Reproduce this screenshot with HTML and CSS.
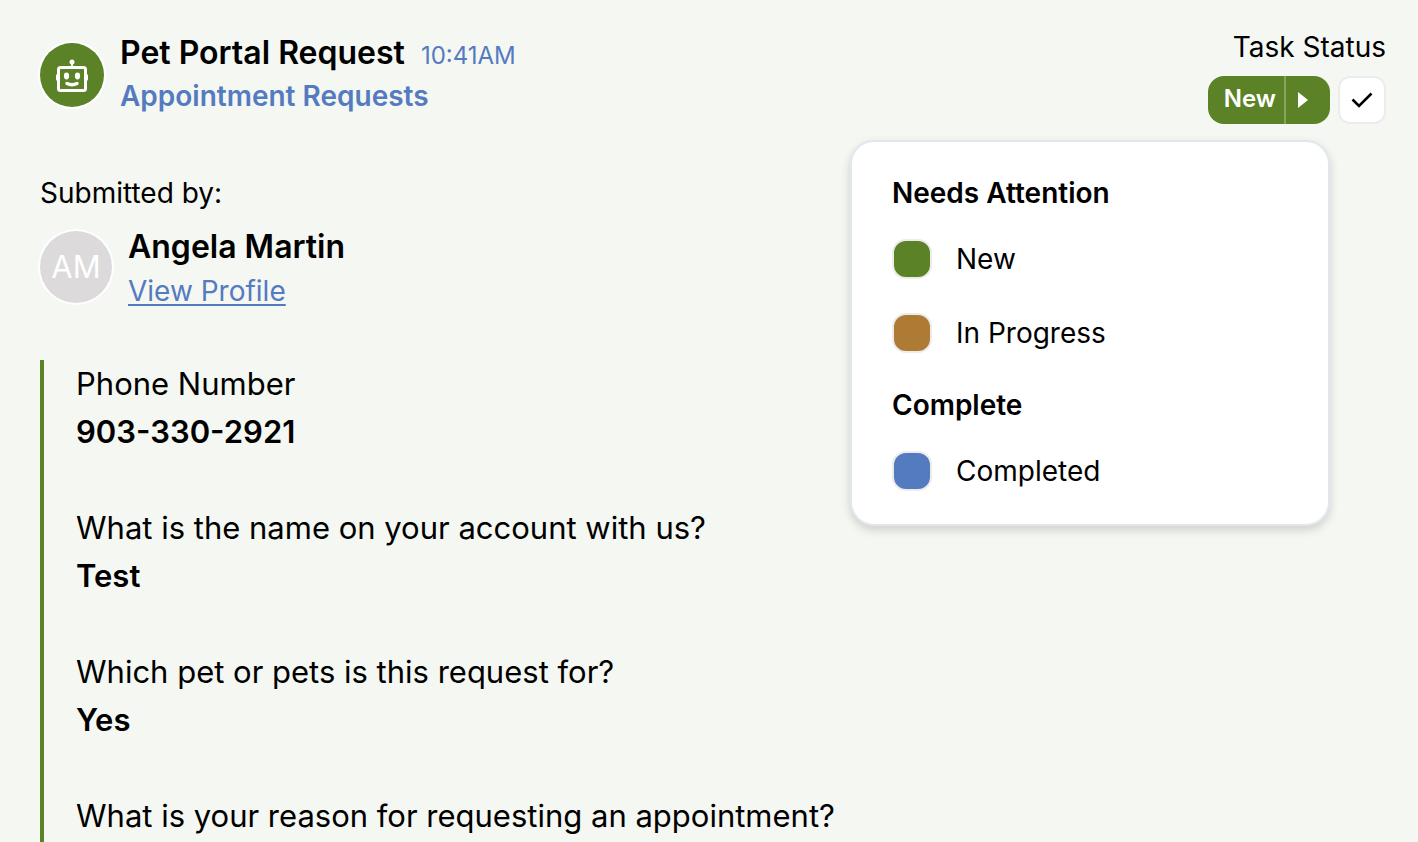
FILE: index.html
```html
<!DOCTYPE html>
<html lang="en">
<head>
<meta charset="utf-8">
<meta name="viewport" content="width=device-width, initial-scale=1">
<title>Pet Portal Request</title>
<link rel="stylesheet" href="styles.css">
</head>
<body>
<main class="page">
  <header class="header">
    <div class="request">
      <span class="bot">
        <svg width="32" height="34" viewBox="0 0 32 34" fill="none" aria-hidden="true">
          <circle cx="16" cy="4" r="2.500" fill="#fff"/>
          <path d="M16 4v6" stroke="#fff" stroke-width="2"/>
          <rect x="2.500" y="9.500" width="27" height="23" rx="2" stroke="#fff" stroke-width="3"/>
          <path d="M1.300 17.500v4M30.700 17.500v4" stroke="#fff" stroke-width="2.600" stroke-linecap="round"/>
          <ellipse cx="10.500" cy="18" rx="2.600" ry="3.400" fill="#fff"/>
          <ellipse cx="21.500" cy="18" rx="2.600" ry="3.400" fill="#fff"/>
          <path d="M11 25.500q5 2.500 10 0" stroke="#fff" stroke-width="3.400" stroke-linecap="round"/>
        </svg>
      </span>
      <div>
        <div class="title-row"><h1 class="title">Pet Portal Request</h1><time class="time">10:41AM</time></div>
        <p class="category">Appointment Requests</p>
      </div>
    </div>
    <div class="status">
      <p class="status-label">Task Status</p>
      <div class="status-actions">
        <button class="status-button" type="button" aria-expanded="true">
          <span class="status-name">New</span>
          <span class="status-arrow"><svg width="10" height="16" viewBox="0 0 10 16" aria-hidden="true"><path d="M0 0l10 8-10 8z" fill="#fff"/></svg></span>
        </button>
        <button class="check-button" type="button" aria-label="Mark complete">
          <svg width="22" height="16" viewBox="0 0 22 16" fill="none" aria-hidden="true"><path d="M1.500 7.500l6.500 6.500L20.500 1.500" stroke="#000" stroke-width="2.600"/></svg>
        </button>
      </div>
      <div class="menu">
        <h2 class="menu-heading">Needs Attention</h2>
        <button class="option" type="button"><span class="swatch swatch-new"></span>New</button>
        <button class="option" type="button"><span class="swatch swatch-progress"></span>In Progress</button>
        <h2 class="menu-heading menu-heading-next">Complete</h2>
        <button class="option" type="button"><span class="swatch swatch-completed"></span>Completed</button>
      </div>
    </div>
  </header>
  <section class="submitter">
    <p>Submitted by:</p>
    <div class="person">
      <span class="avatar">AM</span>
      <div>
        <p class="person-name">Angela Martin</p>
        <a class="profile" href="#">View Profile</a>
      </div>
    </div>
  </section>
  <dl class="answers">
    <div><dt>Phone Number</dt><dd>903-330-2921</dd></div>
    <div><dt>What is the name on your account with us?</dt><dd>Test</dd></div>
    <div><dt>Which pet or pets is this request for?</dt><dd>Yes</dd></div>
    <div><dt>What is your reason for requesting an appointment?</dt></div>
  </dl>
</main>
</body>
</html>
```
FILE: styles.css
```css
* { box-sizing: border-box; }
body {
  margin: 0;
  background: #f5f7f2;
  color: #000;
  font-family: Inter, "Liberation Sans", sans-serif;
  font-size: 28px;
  line-height: 40px;
}
h1, h2, p, dl, dd { margin: 0; }
button { font: inherit; color: inherit; cursor: pointer; }
.page {
  display: flex;
  flex-direction: column;
  min-height: 100vh;
  padding: 27px 32px 0 40px;
}
.header { display: flex; justify-content: space-between; align-items: flex-start; }
.request { display: flex; gap: 16px; padding-top: 4px; }
.bot {
  display: flex;
  align-items: center;
  justify-content: center;
  width: 64px;
  height: 64px;
  margin-top: 12px;
  border-radius: 50%;
  background: #5b8227;
  box-shadow: 0 0 0 2px #fff;
}
.title-row { display: flex; align-items: baseline; gap: 16px; }
.title { font-size: 32px; line-height: 44px; font-weight: 600; }
.time { font-size: 24px; color: #547bc0; }
.category { color: #547bc0; font-weight: 600; }
.status { position: relative; }
.status-label { text-align: right; }
.status-actions { display: flex; justify-content: flex-end; gap: 8px; margin-top: 9px; }
.status-button {
  display: flex;
  height: 48px;
  padding: 0;
  border: 0;
  border-radius: 16px;
  background: #5b8227;
  color: #fff;
  font-size: 24px;
  font-weight: 600;
  line-height: 46px;
}
.status-name { padding: 0 8px 0 16px; }
.status-arrow {
  display: flex;
  align-items: center;
  align-self: stretch;
  padding: 0 22px 0 12px;
  border-left: 2px solid #86a35f;
}
.check-button {
  display: flex;
  align-items: center;
  justify-content: center;
  width: 48px;
  height: 48px;
  padding: 0;
  border: 2px solid #eeebec;
  border-radius: 12px;
  background: #fff;
}
.menu {
  position: absolute;
  top: 113px;
  right: 56px;
  width: 480px;
  padding: 31px 40px 33px;
  border: 2px solid #e2e6ef;
  border-radius: 24px;
  background: #fff;
  box-shadow: 0 4px 10px rgba(0, 0, 0, 0.16);
}
.menu-heading { font-size: 28px; line-height: 40px; font-weight: 600; }
.menu-heading-next { margin-top: 32px; }
.option {
  display: flex;
  align-items: center;
  gap: 24px;
  width: 100%;
  height: 40px;
  margin-top: 34px;
  padding: 0;
  border: 0;
  background: none;
  text-align: left;
}
.menu-heading + .option { margin-top: 26px; }
.swatch { width: 40px; height: 40px; border: 2px solid #eeebec; border-radius: 14px; }
.swatch-new { background: #5b8227; }
.swatch-progress { background: #ae7b34; }
.swatch-completed { background: #547bc0; }
.submitter { margin-top: 49px; }
.person { display: flex; gap: 16px; margin-top: 12px; }
.avatar {
  display: flex;
  align-items: center;
  justify-content: center;
  width: 72px;
  height: 72px;
  margin-top: 6px;
  border-radius: 50%;
  background: #dcdada;
  box-shadow: 0 0 0 2px #fff;
  color: #fff;
  font-size: 31px;
}
.person-name { font-size: 32px; line-height: 44px; font-weight: 600; }
.profile {
  display: inline-block;
  margin-top: 2px;
  color: #547bc0;
  text-underline-offset: 3px;
  text-decoration-thickness: 2px;
}
.answers {
  display: grid;
  flex: 1;
  align-content: start;
  gap: 48px;
  margin-top: 49px;
  padding-left: 32px;
  border-left: 4px solid #5b8227;
  font-size: 31px;
  line-height: 48px;
}
.answers dd { font-weight: 600; }
```
